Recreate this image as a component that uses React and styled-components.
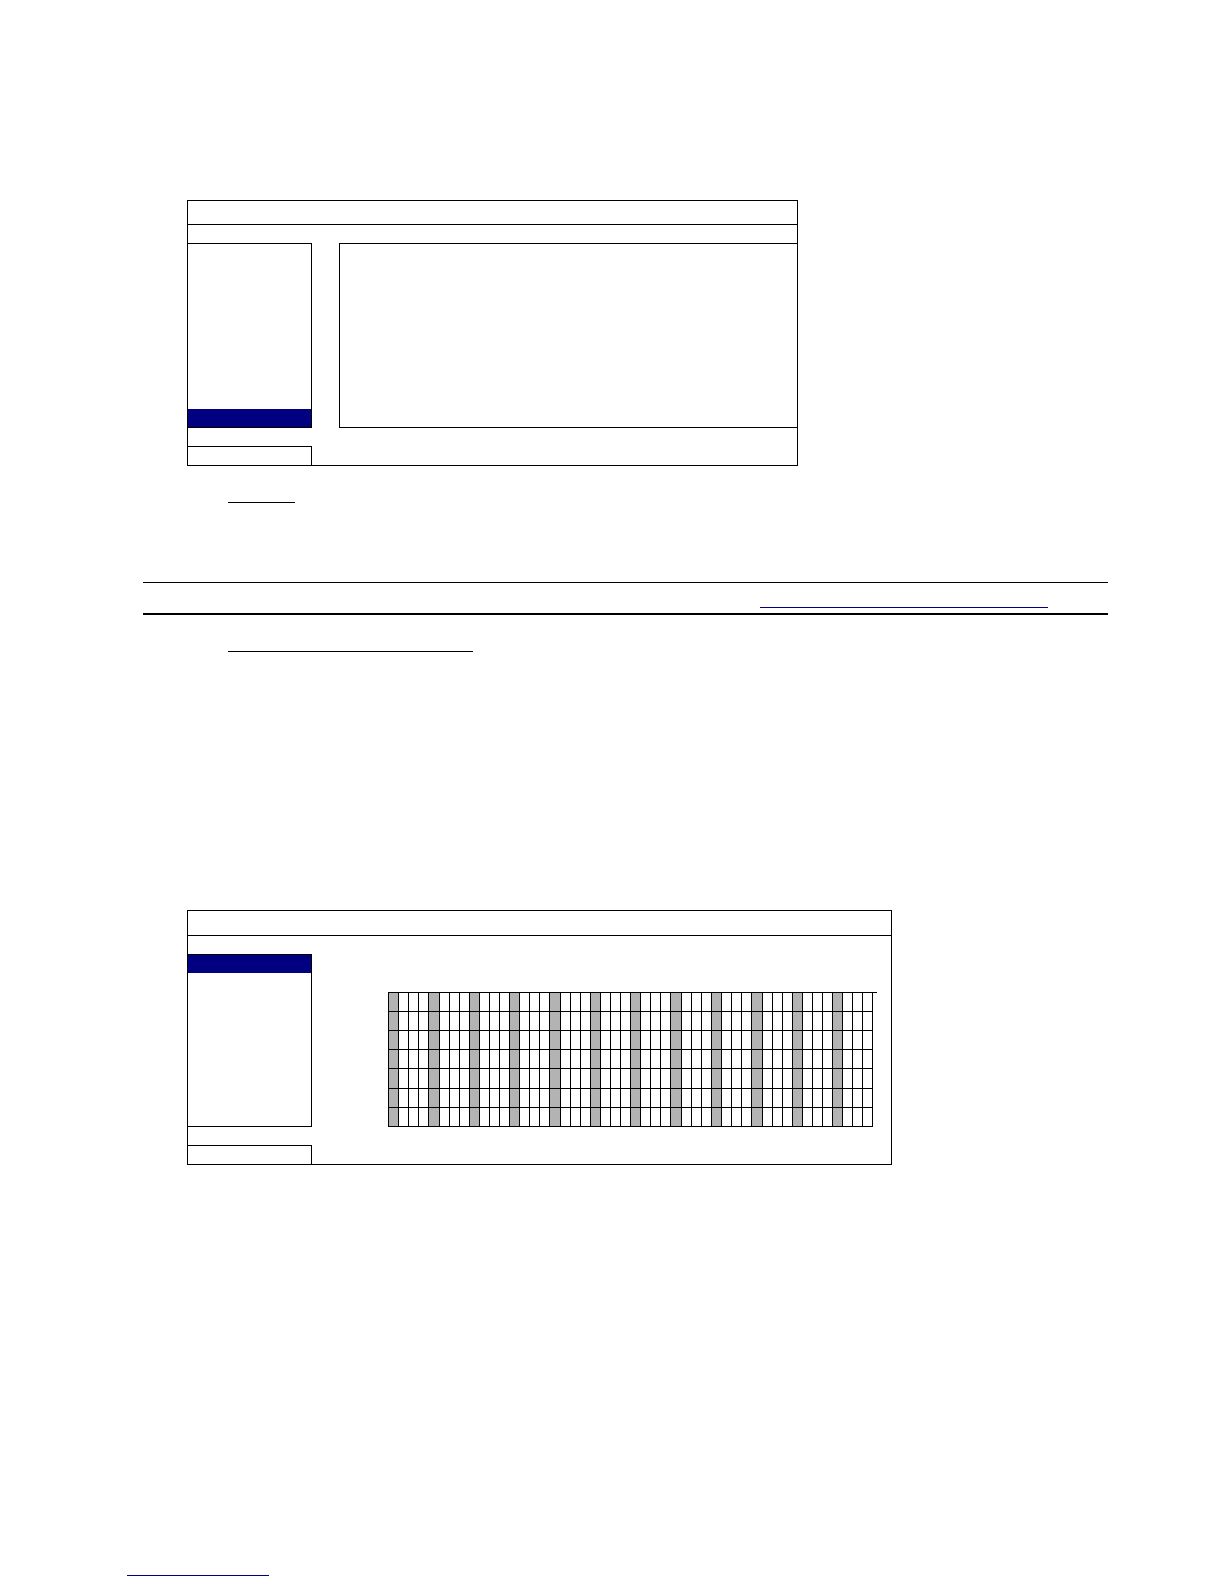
import React from "react";
import styled, { createGlobalStyle } from "styled-components";

// one entry per two hours, some are a pixel wider
const groups = [40, 41, 40, 40, 41, 40, 40, 41, 40, 41, 40, 40];
const days = ["Sun", "Mon", "Tue", "Wed", "Thu", "Fri", "Sat"];

const Schedule = () => (
  <ScheduleWrap>
    <Table aria-label="Weekly schedule">
      <colgroup>
        {groups.map((width, i) => (
          <React.Fragment key={i}>
            <Col wide={width > 40 ? 1 : 0} />
            <Col />
            <Col />
            <Col />
          </React.Fragment>
        ))}
      </colgroup>
      <tbody>
        {days.map((day) => (
          <tr key={day}>
            {groups.map((_, i) => (
              <React.Fragment key={i}>
                <Cell $shaded $tall={day === "Thu"} />
                <Cell />
                <Cell />
                <Cell />
              </React.Fragment>
            ))}
          </tr>
        ))}
      </tbody>
    </Table>
  </ScheduleWrap>
);

const App = () => {
  return (
    <>
      <GlobalStyle />
      <Main>
        <Panel $width={611}>
          <PanelHeader $height={24} />
          <PanelBody $height={185}>
            <Menu>
              <MenuItem />
              <MenuItem $active />
            </Menu>
            <Content $framed />
          </PanelBody>
          <PanelFooter />
        </Panel>

        <Heading $width={67} />
        <Note>
          <NoteLink href="#more" aria-label="More information" />
        </Note>
        <Heading $width={245} />

        <SecondSection>
          <Panel $width={705}>
            <PanelHeader $height={25} />
            <PanelBody $height={173}>
              <Menu>
                <MenuItem $active />
                <MenuItem />
              </Menu>
              <Content>
                <Schedule />
              </Content>
            </PanelBody>
            <PanelFooter />
          </Panel>
        </SecondSection>
      </Main>
      <Footer>
        <FooterLink href="#home" aria-label="Home" />
      </Footer>
    </>
  );
};
export default App;

const GlobalStyle = createGlobalStyle`
  * {
    box-sizing: border-box;
  }
  body {
    margin: 0;
    background: #fff;
    font-family: "Liberation Sans", sans-serif;
  }
`;
const Main = styled.main`
  padding: 200px 116px 0 143px;
`;
const Panel = styled.section`
  max-width: ${(props) => props.$width}px;
  margin-left: 44px;
  border: 1px solid #000;
`;
const PanelHeader = styled.header`
  height: ${(props) => props.$height}px;
  border-bottom: 1px solid #000;
`;
const PanelBody = styled.div`
  display: grid;
  grid-template-columns: 124px 1fr;
  grid-template-rows: minmax(${(props) => props.$height}px, auto);
  padding: 18px 0;
`;
const Menu = styled.ul`
  display: flex;
  flex-direction: column;
  margin: 0;
  padding: 0;
  list-style: none;
  border: 1px solid #000;
  border-left: none;
`;
const MenuItem = styled.li`
  flex: ${(props) => (props.$active ? "0 0 18px" : 1)};
  background: ${(props) => (props.$active ? "#000080" : "transparent")};
`;
const Content = styled.div`
  margin-left: ${(props) => (props.$framed ? 27 : 76)}px;
  padding-top: ${(props) => (props.$framed ? 0 : 38)}px;
  border: ${(props) => (props.$framed ? "1px solid #000" : "none")};
  border-right: none;
`;
const PanelFooter = styled.footer`
  width: 124px;
  height: 19px;
  border-top: 1px solid #000;
  border-right: 1px solid #000;
`;
const Heading = styled.h2`
  width: ${(props) => props.$width}px;
  height: 37px;
  margin: 0 0 0 85px;
  border-bottom: 1px solid #000;
`;
const Note = styled.div`
  display: flex;
  justify-content: flex-end;
  align-items: flex-start;
  height: 33px;
  margin-top: 79px;
  padding-right: 60px;
  border-top: 1px solid #000;
  border-bottom: 2px solid #000;
`;
const NoteLink = styled.a`
  width: 288px;
  height: 25px;
  border-bottom: 1px solid #000080;
`;
const SecondSection = styled.div`
  padding-top: 258px;
`;
// the top rule runs a little past the last column
const ScheduleWrap = styled.div`
  width: 489px;
  border-top: 1px solid #000;
`;
const Table = styled.table`
  width: 485px;
  table-layout: fixed;
  border-collapse: separate;
  border-spacing: 0;
  border-left: 1px solid #000;
`;
const Col = styled.col`
  width: ${(props) => (props.wide ? 11 : 10)}px;
`;
const Cell = styled.td`
  height: ${(props) => (props.$tall ? 20 : 19)}px;
  padding: 0;
  background: ${(props) => (props.$shaded ? "#b3b3b3" : "#fff")};
  border-right: 1px solid #000;
  border-bottom: 1px solid #000;
`;
const Footer = styled.footer`
  padding: 410px 0 8px 127px;
`;
const FooterLink = styled.a`
  display: block;
  width: 142px;
  border-bottom: 1px solid #000080;
`;
